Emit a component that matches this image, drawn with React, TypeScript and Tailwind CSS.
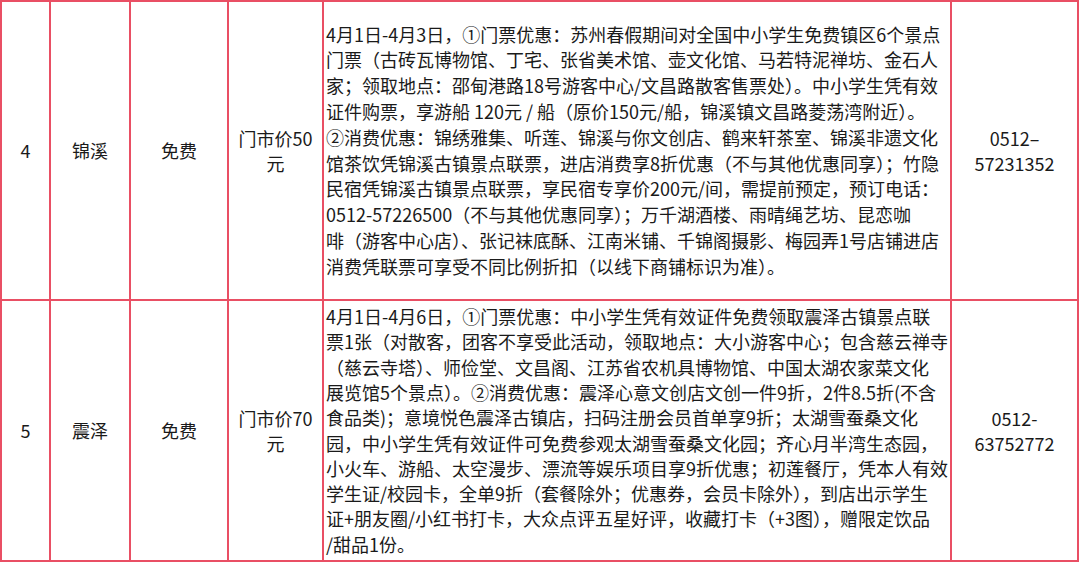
import React from 'react';

type Row = {
  no: string;
  town: string;
  fee: string;
  price: string;
  phone: string[];
  lines: string[];
  height: string;
  leading: string;
};

const rows: Row[] = [
  {
    no: '4',
    town: '锦溪',
    fee: '免费',
    price: '门市价50元',
    phone: ['0512–', '57231352'],
    height: 'h-[299px]',
    leading: 'leading-[25.8px]',
    lines: [
      '4月1日-4月3日，①门票优惠：苏州春假期间对全国中小学生免费镇区6个景点',
      '门票（古砖瓦博物馆、丁宅、张省美术馆、壶文化馆、马若特泥禅坊、金石人',
      '家；领取地点：邵甸港路18号游客中心/文昌路散客售票处）。中小学生凭有效',
      '证件购票，享游船 120元 / 船（原价150元/船，锦溪镇文昌路菱荡湾附近）。',
      '②消费优惠：锦绣雅集、听莲、锦溪与你文创店、鹤来轩茶室、锦溪非遗文化',
      '馆茶饮凭锦溪古镇景点联票，进店消费享8折优惠（不与其他优惠同享）；竹隐',
      '民宿凭锦溪古镇景点联票，享民宿专享价200元/间，需提前预定，预订电话：',
      '0512-57226500（不与其他优惠同享）；万千湖酒楼、雨晴绳艺坊、昆恋咖',
      '啡（游客中心店）、张记袜底酥、江南米铺、千锦阁摄影、梅园弄1号店铺进店',
      '消费凭联票可享受不同比例折扣（以线下商铺标识为准）。',
    ],
  },
  {
    no: '5',
    town: '震泽',
    fee: '免费',
    price: '门市价70元',
    phone: ['0512-', '63752772'],
    height: 'h-[261px]',
    leading: 'leading-[25.3px]',
    lines: [
      '4月1日-4月6日，①门票优惠：中小学生凭有效证件免费领取震泽古镇景点联',
      '票1张（对散客，团客不享受此活动，领取地点：大小游客中心；包含慈云禅寺',
      '（慈云寺塔）、师俭堂、文昌阁、江苏省农机具博物馆、中国太湖农家菜文化',
      '展览馆5个景点）。②消费优惠：震泽心意文创店文创一件9折，2件8.5折(不含',
      '食品类)；意境悦色震泽古镇店，扫码注册会员首单享9折；太湖雪蚕桑文化',
      '园，中小学生凭有效证件可免费参观太湖雪蚕桑文化园；齐心月半湾生态园，',
      '小火车、游船、太空漫步、漂流等娱乐项目享9折优惠；初莲餐厅，凭本人有效',
      '学生证/校园卡，全单9折（套餐除外；优惠券，会员卡除外），到店出示学生',
      '证+朋友圈/小红书打卡，大众点评五星好评，收藏打卡（+3图），赠限定饮品',
      '/甜品1份。',
    ],
  },
];

const cell = 'border-r-2 border-b-2 border-[#e94f64] align-middle text-center p-0';

export default function App() {
  return (
    <div className="w-[1080px] h-[562px] bg-white overflow-hidden text-[#1a1a1a] text-[18px] leading-[25px] font-['Noto_Sans_CJK_SC','Noto_Sans',sans-serif]">
      <table className="table-fixed border-separate border-spacing-0 border-l-2 border-t-2 border-[#e94f64] w-[1079px]">
        <colgroup>
          <col className="w-[49px]" />
          <col className="w-[80px]" />
          <col className="w-[98px]" />
          <col className="w-[95px]" />
          <col className="w-[628px]" />
          <col className="w-[127px]" />
        </colgroup>
        <tbody>
          {rows.map((r) => (
            <tr key={r.no} className={r.height}>
              <td className={cell}>{r.no}</td>
              <td className={cell}>{r.town}</td>
              <td className={cell}>{r.fee}</td>
              <td className={cell + ' px-1'}>{r.price}</td>
              <td className={cell + ' text-left pl-[2px] ' + r.leading}>
                {r.lines.map((l, i) => (
                  <div key={i} className="whitespace-nowrap">
                    {l}
                  </div>
                ))}
              </td>
              <td className={cell}>
                {r.phone.map((p, i) => (
                  <div key={i}>{p}</div>
                ))}
              </td>
            </tr>
          ))}
        </tbody>
      </table>
    </div>
  );
}
